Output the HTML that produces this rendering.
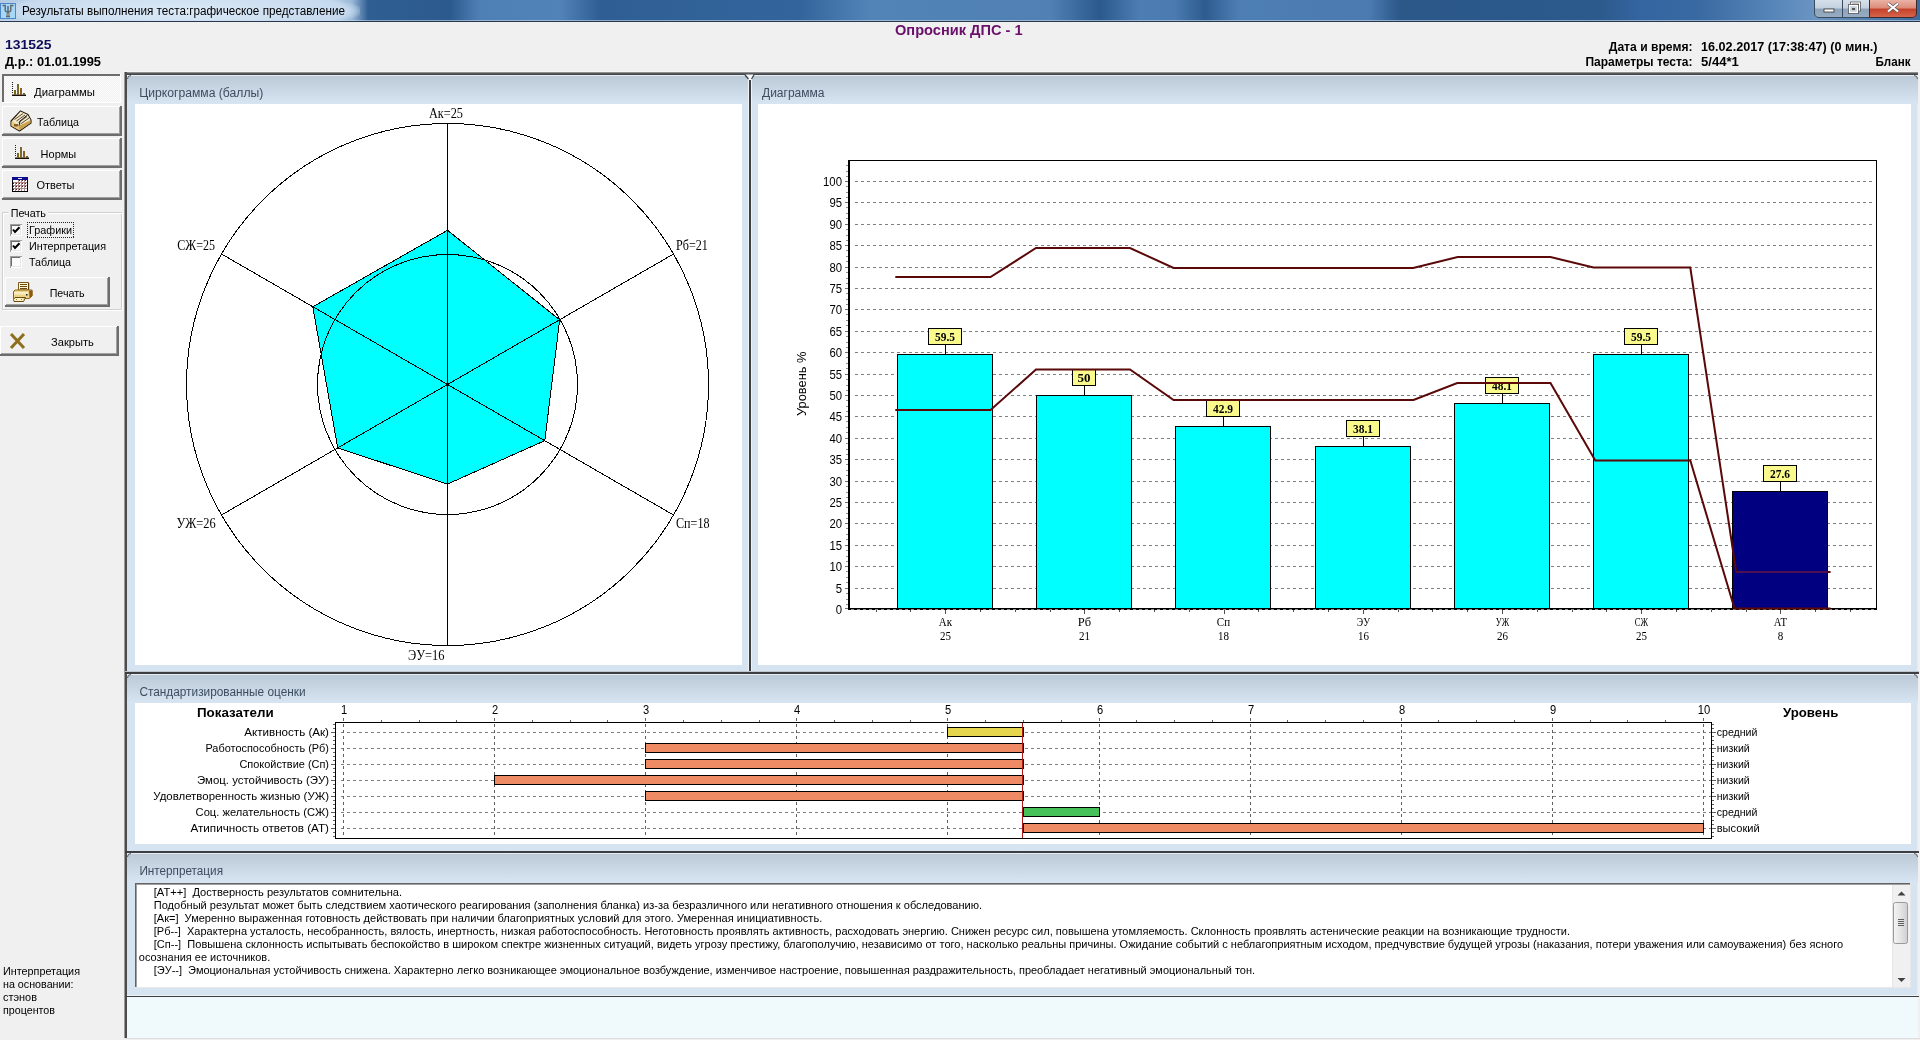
<!DOCTYPE html>
<html><head><meta charset="utf-8"><title>Результаты</title>
<style>
html,body{margin:0;padding:0;width:1920px;height:1040px;overflow:hidden;background:#f0f0f0;}
svg{display:block;will-change:transform;}
text{white-space:pre;}
</style></head><body>
<svg width="1920" height="1040" viewBox="0 0 1920 1040">
<defs>
<linearGradient id="ptitle" x1="0" y1="0" x2="0" y2="1">
<stop offset="0" stop-color="#bccad8"/><stop offset="1" stop-color="#d7e5f3"/></linearGradient>
<linearGradient id="tbar" x1="0" y1="0" x2="1920" y2="0" gradientUnits="userSpaceOnUse">
<stop offset="0.0000" stop-color="#b4cce4"/>
<stop offset="0.1719" stop-color="#bcd3ea"/>
<stop offset="0.1833" stop-color="#9ab8d8"/>
<stop offset="0.1917" stop-color="#2f5e93"/>
<stop offset="0.2344" stop-color="#2c5a8e"/>
<stop offset="0.2500" stop-color="#4f80b5"/>
<stop offset="0.2917" stop-color="#5283b8"/>
<stop offset="0.3125" stop-color="#2e5e94"/>
<stop offset="0.4167" stop-color="#33659c"/>
<stop offset="0.4531" stop-color="#5284b8"/>
<stop offset="0.5469" stop-color="#5080b4"/>
<stop offset="0.5729" stop-color="#2b598d"/>
<stop offset="0.5938" stop-color="#4d7eb3"/>
<stop offset="0.6120" stop-color="#4a7ab0"/>
<stop offset="0.6276" stop-color="#2e5b8f"/>
<stop offset="0.6458" stop-color="#4e7fb4"/>
<stop offset="0.7135" stop-color="#4a7aaf"/>
<stop offset="0.7292" stop-color="#2b5789"/>
<stop offset="0.8333" stop-color="#2c5a8d"/>
<stop offset="0.8542" stop-color="#3565a0"/>
<stop offset="0.8854" stop-color="#3a6aa2"/>
<stop offset="0.9271" stop-color="#5a88bb"/>
<stop offset="0.9448" stop-color="#6a94c2"/>
<stop offset="1.0000" stop-color="#3a6a9e"/>
</linearGradient>
<radialGradient id="glow" cx="180" cy="11" r="185" gradientUnits="userSpaceOnUse" gradientTransform="translate(180 11) scale(1 0.12) translate(-180 -11)">
<stop offset="0" stop-color="#dceaf7"/><stop offset="0.9" stop-color="#c6daee"/><stop offset="1" stop-color="#c6daee" stop-opacity="0"/></radialGradient>
<linearGradient id="minbtn" x1="0" y1="0" x2="0" y2="1">
<stop offset="0" stop-color="#d6e0ea"/><stop offset="0.45" stop-color="#c2d0de"/><stop offset="0.5" stop-color="#8ca3bb"/><stop offset="1" stop-color="#98aec4"/></linearGradient>
<linearGradient id="clsbtn" x1="0" y1="0" x2="0" y2="1">
<stop offset="0" stop-color="#eab3a6"/><stop offset="0.45" stop-color="#dc8a78"/><stop offset="0.5" stop-color="#c4402a"/><stop offset="1" stop-color="#d86a50"/></linearGradient>
<linearGradient id="pborder" x1="0" y1="0" x2="0" y2="1">
<stop offset="0" stop-color="#b0b0b0"/><stop offset="0.4" stop-color="#5e5f61"/><stop offset="1" stop-color="#3a3c3f"/></linearGradient>
<linearGradient id="thumb" x1="0" y1="0" x2="1" y2="0">
<stop offset="0" stop-color="#f4f4f4"/><stop offset="0.5" stop-color="#e4e4e4"/><stop offset="1" stop-color="#cfcfcf"/></linearGradient>
<pattern id="dither" width="2" height="2" patternUnits="userSpaceOnUse"><rect width="2" height="2" fill="#f0f0f0"/><rect width="1" height="1" fill="#fdfdfd"/><rect x="1" y="1" width="1" height="1" fill="#fdfdfd"/></pattern>
</defs>
<rect x="0" y="0" width="1920" height="1040" fill="#f0f0f0" />
<rect x="0" y="0" width="1920" height="21" fill="url(#tbar)" />
<rect x="0" y="0" width="360" height="21" fill="url(#glow)" />
<rect x="0" y="20" width="1920" height="1" fill="#c8dcee" opacity="0.6"/>
<rect x="0" y="21" width="1920" height="1" fill="#29384a" />
<rect x="0" y="3" width="16" height="16" fill="#a4d8f6" />
<rect x="0.5" y="3.5" width="15" height="15" fill="none" stroke="#4f86c8" stroke-width="1"/>
<path d="M2.5,5.5 H5.2 V10 Q5.2,12 8,12 Q10.8,12 10.8,10 V5.5 H13.5" fill="none" stroke="#5e6870" stroke-width="1.4"/>
<path d="M8,6 V17 M6,16.5 H10" fill="none" stroke="#5e6870" stroke-width="1.5"/>
<rect x="6.5" y="13" width="3" height="3" fill="#8a8a8a" />
<text x="22.00" y="15.00" font-family="'Liberation Sans', sans-serif" font-size="12" font-weight="normal" fill="#000" text-anchor="start" textLength="323.00" lengthAdjust="spacingAndGlyphs" >Результаты выполнения теста:графическое представление</text>
<path d="M1814,0 V13 Q1814,18 1819,18 H1869 V0 Z" fill="url(#minbtn)"/>
<path d="M1814.5,0 V13 Q1814.5,17.5 1819,17.5 H1869" fill="none" stroke="#3b4a5c" stroke-width="1"/>
<line x1="1842.5" y1="0" x2="1842.5" y2="17.5" stroke="#3b4a5c" stroke-width="1" />
<path d="M1869,0 V18 H1912 Q1917,18 1917,13 V0 Z" fill="url(#clsbtn)"/>
<path d="M1869.5,0 V17.5 H1912 Q1916.5,17.5 1916.5,13 V0" fill="none" stroke="#3b2a2a" stroke-width="1"/>
<rect x="1824" y="9" width="10" height="3" fill="#ffffff" stroke="#333" stroke-width="0.8"/>
<rect x="1851.5" y="3" width="8" height="7" fill="none" stroke="#333" stroke-width="2.6"/>
<rect x="1851.5" y="3" width="8" height="7" fill="none" stroke="#fff" stroke-width="1.4"/>
<rect x="1849.5" y="5.5" width="8" height="7" fill="#c2d0de" stroke="#333" stroke-width="2.6"/>
<rect x="1849.5" y="5.5" width="8" height="7" fill="#c2d0de" stroke="#fff" stroke-width="1.4"/>
<rect x="1852" y="8" width="3" height="2" fill="#555" />
<path d="M1888,3.5 L1898,11.5 M1898,3.5 L1888,11.5" stroke="#555" stroke-width="3.4"/>
<path d="M1888,3.5 L1898,11.5 M1898,3.5 L1888,11.5" stroke="#fff" stroke-width="2.2"/>
<text x="5.00" y="48.75" font-family="'Liberation Sans', sans-serif" font-size="13" font-weight="bold" fill="#0e0e5a" text-anchor="start" textLength="46.50" lengthAdjust="spacingAndGlyphs" >131525</text>
<text x="5.00" y="66.00" font-family="'Liberation Sans', sans-serif" font-size="13" font-weight="bold" fill="#000" text-anchor="start" textLength="96.00" lengthAdjust="spacingAndGlyphs" >Д.р.: 01.01.1995</text>
<text x="895.00" y="35.00" font-family="'Liberation Sans', sans-serif" font-size="14" font-weight="bold" fill="#6a0f6a" text-anchor="start" textLength="127.50" lengthAdjust="spacingAndGlyphs" >Опросник ДПС - 1</text>
<text x="1608.75" y="51.25" font-family="'Liberation Sans', sans-serif" font-size="12" font-weight="bold" fill="#000" text-anchor="start" textLength="83.75" lengthAdjust="spacingAndGlyphs" >Дата и время:</text>
<text x="1701.00" y="51.25" font-family="'Liberation Sans', sans-serif" font-size="12" font-weight="bold" fill="#000" text-anchor="start" textLength="176.50" lengthAdjust="spacingAndGlyphs" >16.02.2017 (17:38:47) (0 мин.)</text>
<text x="1585.50" y="66.25" font-family="'Liberation Sans', sans-serif" font-size="12" font-weight="bold" fill="#000" text-anchor="start" textLength="107.00" lengthAdjust="spacingAndGlyphs" >Параметры теста:</text>
<text x="1701.00" y="66.25" font-family="'Liberation Sans', sans-serif" font-size="12" font-weight="bold" fill="#000" text-anchor="start" textLength="37.75" lengthAdjust="spacingAndGlyphs" >5/44*1</text>
<text x="1875.50" y="66.25" font-family="'Liberation Sans', sans-serif" font-size="12" font-weight="bold" fill="#000" text-anchor="start" textLength="35.00" lengthAdjust="spacingAndGlyphs" >Бланк</text>
<rect x="2" y="74" width="119" height="29" fill="url(#dither)" />
<rect x="2" y="74" width="119" height="2" fill="#6d6d6d" />
<rect x="2" y="74" width="2" height="29" fill="#6d6d6d" />
<rect x="2" y="102" width="119" height="1" fill="#ffffff" />
<rect x="120" y="74" width="1" height="29" fill="#ffffff" />
<rect x="2" y="106" width="120" height="30" fill="#f0f0f0" />
<rect x="2" y="106" width="120" height="1" fill="#ffffff" />
<rect x="2" y="106" width="1" height="30" fill="#ffffff" />
<rect x="2" y="134" width="120" height="2" fill="#6d6d6d" />
<rect x="120" y="106" width="2" height="30" fill="#6d6d6d" />
<rect x="3" y="133" width="117" height="1" fill="#a0a0a0" />
<rect x="119" y="107" width="1" height="27" fill="#a0a0a0" />
<rect x="2" y="138" width="120" height="30" fill="#f0f0f0" />
<rect x="2" y="138" width="120" height="1" fill="#ffffff" />
<rect x="2" y="138" width="1" height="30" fill="#ffffff" />
<rect x="2" y="166" width="120" height="2" fill="#6d6d6d" />
<rect x="120" y="138" width="2" height="30" fill="#6d6d6d" />
<rect x="3" y="165" width="117" height="1" fill="#a0a0a0" />
<rect x="119" y="139" width="1" height="27" fill="#a0a0a0" />
<rect x="2" y="170" width="120" height="30" fill="#f0f0f0" />
<rect x="2" y="170" width="120" height="1" fill="#ffffff" />
<rect x="2" y="170" width="1" height="30" fill="#ffffff" />
<rect x="2" y="198" width="120" height="2" fill="#6d6d6d" />
<rect x="120" y="170" width="2" height="30" fill="#6d6d6d" />
<rect x="3" y="197" width="117" height="1" fill="#a0a0a0" />
<rect x="119" y="171" width="1" height="27" fill="#a0a0a0" />
<rect x="12" y="82" width="1" height="1" fill="#202020" />
<rect x="12" y="84" width="1" height="1" fill="#202020" />
<rect x="12" y="86" width="1" height="1" fill="#202020" />
<rect x="12" y="88" width="1" height="1" fill="#202020" />
<rect x="12" y="90" width="1" height="1" fill="#202020" />
<rect x="12" y="92" width="1" height="1" fill="#202020" />
<rect x="12" y="94.5" width="14" height="1.5" fill="#1a1208" />
<rect x="14" y="90" width="2" height="5" fill="#75661a" />
<rect x="17" y="84" width="2" height="11" fill="#7a6a30" />
<rect x="20" y="88" width="2" height="7" fill="#8a6020" />
<rect x="23" y="93" width="2" height="2" fill="#6a6040" />
<rect x="15" y="145" width="1" height="1" fill="#202020" />
<rect x="15" y="147" width="1" height="1" fill="#202020" />
<rect x="15" y="149" width="1" height="1" fill="#202020" />
<rect x="15" y="151" width="1" height="1" fill="#202020" />
<rect x="15" y="153" width="1" height="1" fill="#202020" />
<rect x="15" y="155" width="1" height="1" fill="#202020" />
<rect x="15" y="157.5" width="14" height="1.5" fill="#1a1208" />
<rect x="17" y="153" width="2" height="5" fill="#75661a" />
<rect x="20" y="147" width="2" height="11" fill="#7a6a30" />
<rect x="23" y="151" width="2" height="7" fill="#8a6020" />
<rect x="26" y="156" width="2" height="2" fill="#6a6040" />
<text x="34.00" y="95.60" font-family="'Liberation Sans', sans-serif" font-size="11" font-weight="normal" fill="#000" text-anchor="start" textLength="61.00" lengthAdjust="spacingAndGlyphs" >Диаграммы</text>
<path d="M20.5,111 L28,114.5 L31,120 L31,123 L19.5,131 L11,126 L11,121 Z" fill="#d9b76c" stroke="#1e1a10" stroke-width="1.1" stroke-linejoin="round"/>
<path d="M20.5,111.5 L27.5,115 L30.5,120 L19,126 L12,121.5 Z" fill="#f2e8cc"/>
<path d="M14.5,119.5 L23,113.5 M16.5,121 L25,115 M18.5,122.5 L27,116.5 M20.5,124 L29,118" stroke="#5a4a30" stroke-width="1"/>
<path d="M27.5,115 L20,121 L19,126" fill="none" stroke="#222" stroke-width="1"/>
<path d="M11.5,121.5 L19,126 L19.5,130.5 L11.5,126 Z" fill="#e6c884"/>
<path d="M19,126 L30.5,120.5 L30.5,123 L19.5,130.5 Z" fill="#c9a24c"/>
<rect x="14" y="124" width="4" height="2.5" fill="#8a6418" />
<text x="37.00" y="125.60" font-family="'Liberation Sans', sans-serif" font-size="11" font-weight="normal" fill="#000" text-anchor="start" textLength="42.00" lengthAdjust="spacingAndGlyphs" >Таблица</text>
<text x="40.60" y="157.50" font-family="'Liberation Sans', sans-serif" font-size="11" font-weight="normal" fill="#000" text-anchor="start" textLength="35.60" lengthAdjust="spacingAndGlyphs" >Нормы</text>
<rect x="12" y="177" width="16" height="15" fill="#000000" />
<rect x="12" y="177" width="16" height="3" fill="#0c0c90" />
<rect x="18" y="178" width="4" height="1" fill="#e0e0ff" />
<rect x="13" y="180" width="14" height="11" fill="#a88888" />
<rect x="13" y="180" width="2" height="2" fill="#ffffff" />
<rect x="13" y="183" width="2" height="2" fill="#ffffff" />
<rect x="13" y="183" width="1" height="1" fill="#6a1010" />
<rect x="13" y="186" width="2" height="2" fill="#ffffff" />
<rect x="13" y="186" width="1" height="1" fill="#6a1010" />
<rect x="13" y="189" width="2" height="2" fill="#ffffff" />
<rect x="13" y="189" width="1" height="1" fill="#6a1010" />
<rect x="16" y="180" width="2" height="2" fill="#ffffff" />
<rect x="16" y="180" width="1" height="1" fill="#6a1010" />
<rect x="16" y="183" width="2" height="2" fill="#ffffff" />
<rect x="16" y="183" width="1" height="1" fill="#6a1010" />
<rect x="16" y="186" width="2" height="2" fill="#ffffff" />
<rect x="16" y="186" width="1" height="1" fill="#6a1010" />
<rect x="16" y="189" width="2" height="2" fill="#ffffff" />
<rect x="16" y="189" width="1" height="1" fill="#6a1010" />
<rect x="19" y="180" width="2" height="2" fill="#ffffff" />
<rect x="19" y="180" width="1" height="1" fill="#6a1010" />
<rect x="19" y="183" width="2" height="2" fill="#ffffff" />
<rect x="19" y="183" width="1" height="1" fill="#6a1010" />
<rect x="19" y="186" width="2" height="2" fill="#ffffff" />
<rect x="19" y="186" width="1" height="1" fill="#6a1010" />
<rect x="19" y="189" width="2" height="2" fill="#ffffff" />
<rect x="19" y="189" width="1" height="1" fill="#6a1010" />
<rect x="22" y="180" width="2" height="2" fill="#ffffff" />
<rect x="22" y="180" width="1" height="1" fill="#6a1010" />
<rect x="22" y="183" width="2" height="2" fill="#ffffff" />
<rect x="22" y="183" width="1" height="1" fill="#6a1010" />
<rect x="22" y="186" width="2" height="2" fill="#ffffff" />
<rect x="22" y="186" width="1" height="1" fill="#6a1010" />
<rect x="22" y="189" width="2" height="2" fill="#ffffff" />
<rect x="25" y="180" width="2" height="2" fill="#ffffff" />
<rect x="25" y="180" width="1" height="1" fill="#6a1010" />
<rect x="25" y="183" width="2" height="2" fill="#ffffff" />
<rect x="25" y="183" width="1" height="1" fill="#6a1010" />
<rect x="25" y="186" width="2" height="2" fill="#ffffff" />
<rect x="25" y="186" width="1" height="1" fill="#6a1010" />
<rect x="25" y="189" width="2" height="2" fill="#ffffff" />
<rect x="13" y="180" width="5" height="2" fill="#ffffff" />
<text x="36.50" y="189.40" font-family="'Liberation Sans', sans-serif" font-size="11" font-weight="normal" fill="#000" text-anchor="start" textLength="38.00" lengthAdjust="spacingAndGlyphs" >Ответы</text>
<path d="M8.5,212.5 H2.5 V309.5 H121.5 V212.5 H48" fill="none" stroke="#d0d0d0" stroke-width="1"/>
<path d="M8.5,213.5 H3.5 V308.5 M3.5,310.5 H122.5 V213.5 H48" fill="none" stroke="#ffffff" stroke-width="1"/>
<text x="10.70" y="216.60" font-family="'Liberation Sans', sans-serif" font-size="11" font-weight="normal" fill="#000" text-anchor="start" textLength="35.30" lengthAdjust="spacingAndGlyphs" >Печать</text>
<rect x="10" y="224" width="12" height="12" fill="#ffffff" />
<rect x="10" y="224" width="12" height="1" fill="#a0a0a0" />
<rect x="10" y="224" width="1" height="12" fill="#a0a0a0" />
<rect x="11" y="225" width="10" height="1" fill="#6e6e6e" />
<rect x="11" y="225" width="1" height="10" fill="#6e6e6e" />
<rect x="11" y="234" width="10" height="1" fill="#e6e6e6" />
<rect x="20" y="225" width="1" height="10" fill="#e6e6e6" />
<rect x="12" y="226" width="8" height="8" fill="#fbfbfb" />
<path d="M13,229.5 L15,232 L19.5,227.2" fill="none" stroke="#000" stroke-width="2"/>
<rect x="10" y="240" width="12" height="12" fill="#ffffff" />
<rect x="10" y="240" width="12" height="1" fill="#a0a0a0" />
<rect x="10" y="240" width="1" height="12" fill="#a0a0a0" />
<rect x="11" y="241" width="10" height="1" fill="#6e6e6e" />
<rect x="11" y="241" width="1" height="10" fill="#6e6e6e" />
<rect x="11" y="250" width="10" height="1" fill="#e6e6e6" />
<rect x="20" y="241" width="1" height="10" fill="#e6e6e6" />
<rect x="12" y="242" width="8" height="8" fill="#fbfbfb" />
<path d="M13,245.5 L15,248 L19.5,243.2" fill="none" stroke="#000" stroke-width="2"/>
<rect x="10" y="256" width="12" height="12" fill="#ffffff" />
<rect x="10" y="256" width="12" height="1" fill="#a0a0a0" />
<rect x="10" y="256" width="1" height="12" fill="#a0a0a0" />
<rect x="11" y="257" width="10" height="1" fill="#6e6e6e" />
<rect x="11" y="257" width="1" height="10" fill="#6e6e6e" />
<rect x="11" y="266" width="10" height="1" fill="#e6e6e6" />
<rect x="20" y="257" width="1" height="10" fill="#e6e6e6" />
<rect x="12" y="258" width="8" height="8" fill="#fbfbfb" />
<text x="29.00" y="234.40" font-family="'Liberation Sans', sans-serif" font-size="11" font-weight="normal" fill="#000" text-anchor="start" textLength="43.00" lengthAdjust="spacingAndGlyphs" >Графики</text>
<rect x="27" y="222" width="1" height="1" fill="#222" />
<rect x="27" y="237" width="1" height="1" fill="#222" />
<rect x="29" y="222" width="1" height="1" fill="#222" />
<rect x="29" y="237" width="1" height="1" fill="#222" />
<rect x="31" y="222" width="1" height="1" fill="#222" />
<rect x="31" y="237" width="1" height="1" fill="#222" />
<rect x="33" y="222" width="1" height="1" fill="#222" />
<rect x="33" y="237" width="1" height="1" fill="#222" />
<rect x="35" y="222" width="1" height="1" fill="#222" />
<rect x="35" y="237" width="1" height="1" fill="#222" />
<rect x="37" y="222" width="1" height="1" fill="#222" />
<rect x="37" y="237" width="1" height="1" fill="#222" />
<rect x="39" y="222" width="1" height="1" fill="#222" />
<rect x="39" y="237" width="1" height="1" fill="#222" />
<rect x="41" y="222" width="1" height="1" fill="#222" />
<rect x="41" y="237" width="1" height="1" fill="#222" />
<rect x="43" y="222" width="1" height="1" fill="#222" />
<rect x="43" y="237" width="1" height="1" fill="#222" />
<rect x="45" y="222" width="1" height="1" fill="#222" />
<rect x="45" y="237" width="1" height="1" fill="#222" />
<rect x="47" y="222" width="1" height="1" fill="#222" />
<rect x="47" y="237" width="1" height="1" fill="#222" />
<rect x="49" y="222" width="1" height="1" fill="#222" />
<rect x="49" y="237" width="1" height="1" fill="#222" />
<rect x="51" y="222" width="1" height="1" fill="#222" />
<rect x="51" y="237" width="1" height="1" fill="#222" />
<rect x="53" y="222" width="1" height="1" fill="#222" />
<rect x="53" y="237" width="1" height="1" fill="#222" />
<rect x="55" y="222" width="1" height="1" fill="#222" />
<rect x="55" y="237" width="1" height="1" fill="#222" />
<rect x="57" y="222" width="1" height="1" fill="#222" />
<rect x="57" y="237" width="1" height="1" fill="#222" />
<rect x="59" y="222" width="1" height="1" fill="#222" />
<rect x="59" y="237" width="1" height="1" fill="#222" />
<rect x="61" y="222" width="1" height="1" fill="#222" />
<rect x="61" y="237" width="1" height="1" fill="#222" />
<rect x="63" y="222" width="1" height="1" fill="#222" />
<rect x="63" y="237" width="1" height="1" fill="#222" />
<rect x="65" y="222" width="1" height="1" fill="#222" />
<rect x="65" y="237" width="1" height="1" fill="#222" />
<rect x="67" y="222" width="1" height="1" fill="#222" />
<rect x="67" y="237" width="1" height="1" fill="#222" />
<rect x="69" y="222" width="1" height="1" fill="#222" />
<rect x="69" y="237" width="1" height="1" fill="#222" />
<rect x="71" y="222" width="1" height="1" fill="#222" />
<rect x="71" y="237" width="1" height="1" fill="#222" />
<rect x="73" y="222" width="1" height="1" fill="#222" />
<rect x="73" y="237" width="1" height="1" fill="#222" />
<rect x="27" y="222" width="1" height="1" fill="#222" />
<rect x="73" y="222" width="1" height="1" fill="#222" />
<rect x="27" y="224" width="1" height="1" fill="#222" />
<rect x="73" y="224" width="1" height="1" fill="#222" />
<rect x="27" y="226" width="1" height="1" fill="#222" />
<rect x="73" y="226" width="1" height="1" fill="#222" />
<rect x="27" y="228" width="1" height="1" fill="#222" />
<rect x="73" y="228" width="1" height="1" fill="#222" />
<rect x="27" y="230" width="1" height="1" fill="#222" />
<rect x="73" y="230" width="1" height="1" fill="#222" />
<rect x="27" y="232" width="1" height="1" fill="#222" />
<rect x="73" y="232" width="1" height="1" fill="#222" />
<rect x="27" y="234" width="1" height="1" fill="#222" />
<rect x="73" y="234" width="1" height="1" fill="#222" />
<rect x="27" y="236" width="1" height="1" fill="#222" />
<rect x="73" y="236" width="1" height="1" fill="#222" />
<text x="29.00" y="250.40" font-family="'Liberation Sans', sans-serif" font-size="11" font-weight="normal" fill="#000" text-anchor="start" textLength="77.00" lengthAdjust="spacingAndGlyphs" >Интерпретация</text>
<text x="29.00" y="266.30" font-family="'Liberation Sans', sans-serif" font-size="11" font-weight="normal" fill="#000" text-anchor="start" textLength="42.00" lengthAdjust="spacingAndGlyphs" >Таблица</text>
<rect x="5" y="277" width="105" height="30" fill="#f0f0f0" />
<rect x="5" y="277" width="105" height="1" fill="#ffffff" />
<rect x="5" y="277" width="1" height="30" fill="#ffffff" />
<rect x="5" y="305" width="105" height="2" fill="#6d6d6d" />
<rect x="108" y="277" width="2" height="30" fill="#6d6d6d" />
<rect x="6" y="304" width="102" height="1" fill="#a0a0a0" />
<rect x="107" y="278" width="1" height="27" fill="#a0a0a0" />
<path d="M18.5,282.5 H28.5 V290 H18.5 Z" fill="#fff8d2" stroke="#7a5a18" stroke-width="1"/>
<rect x="28" y="283" width="1.2" height="7" fill="#5a3a08" />
<path d="M20,284.5 H27 M20,286.5 H27 M20,288.5 H27" stroke="#6a4a10" stroke-width="1"/>
<path d="M14,291 L15,290 H32 V296 L29.5,298.5 H13.5 V292 Z" fill="#ecd48a" stroke="#8a6418" stroke-width="1"/>
<path d="M29,290.5 L32.5,290.5 L32.5,295.5 L29.5,298.5 Z" fill="#8a5a14"/>
<rect x="14" y="292" width="14" height="2.5" fill="#f8ecc0" />
<rect x="26" y="294" width="1.5" height="1.5" fill="#222" />
<path d="M15,297.5 H25.5 L23.5,301.5 H14 L13.5,299.5 Z" fill="#fff2c4" stroke="#6a4a10" stroke-width="1"/>
<path d="M16,299 L17,300 M21,299 L22,300 M23,298.5 L24,299.5" stroke="#8a6a20" stroke-width="0.8"/>
<text x="49.70" y="296.70" font-family="'Liberation Sans', sans-serif" font-size="11" font-weight="normal" fill="#000" text-anchor="start" textLength="35.00" lengthAdjust="spacingAndGlyphs" >Печать</text>
<rect x="0" y="326" width="119" height="30" fill="#f0f0f0" />
<rect x="0" y="326" width="119" height="1" fill="#ffffff" />
<rect x="0" y="326" width="1" height="30" fill="#ffffff" />
<rect x="0" y="354" width="119" height="2" fill="#6d6d6d" />
<rect x="117" y="326" width="2" height="30" fill="#6d6d6d" />
<rect x="1" y="353" width="116" height="1" fill="#a0a0a0" />
<rect x="116" y="327" width="1" height="27" fill="#a0a0a0" />
<path d="M11,334 L24,348 M24,334 L11,348" stroke="#8d6e1e" stroke-width="3"/>
<text x="51.00" y="346.00" font-family="'Liberation Sans', sans-serif" font-size="11" font-weight="normal" fill="#000" text-anchor="start" textLength="42.80" lengthAdjust="spacingAndGlyphs" >Закрыть</text>
<text x="3.00" y="975.00" font-family="'Liberation Sans', sans-serif" font-size="11" font-weight="normal" fill="#000" text-anchor="start" textLength="77.00" lengthAdjust="spacingAndGlyphs" >Интерпретация</text>
<text x="3.00" y="988.00" font-family="'Liberation Sans', sans-serif" font-size="11" font-weight="normal" fill="#000" text-anchor="start" textLength="70.50" lengthAdjust="spacingAndGlyphs" >на основании:</text>
<text x="3.00" y="1001.00" font-family="'Liberation Sans', sans-serif" font-size="11" font-weight="normal" fill="#000" text-anchor="start" textLength="34.00" lengthAdjust="spacingAndGlyphs" >стэнов</text>
<text x="3.00" y="1014.00" font-family="'Liberation Sans', sans-serif" font-size="11" font-weight="normal" fill="#000" text-anchor="start" textLength="52.00" lengthAdjust="spacingAndGlyphs" >процентов</text>
<rect x="127" y="74" width="1791" height="964" fill="#d6e4f2" />
<rect x="125" y="72" width="1794" height="3" fill="url(#pborder)" />
<rect x="125" y="71" width="1794" height="1" fill="#f6f6f6" />
<rect x="125" y="72" width="2" height="966" fill="#4a4c4f" />
<rect x="124" y="72" width="1" height="966" fill="#9a9a9a" />
<rect x="1918" y="72" width="2" height="966" fill="#f0f0f0" />
<rect x="1917" y="75" width="1" height="963" fill="#e4ecf4" />
<rect x="127" y="75" width="623" height="1" fill="#e8edf3" />
<rect x="127" y="76" width="623" height="28" fill="url(#ptitle)" />
<rect x="752" y="75" width="1166" height="1" fill="#e8edf3" />
<rect x="752" y="76" width="1166" height="28" fill="url(#ptitle)" />
<rect x="749" y="74" width="2" height="599" fill="#3c3e41" />
<rect x="748" y="75" width="1" height="598" fill="#eef3f8" />
<rect x="751" y="75" width="1" height="598" fill="#eef3f8" />
<path d="M745.5,74.5 L753.5,74.5 L751,78 L751,80 L749,80 L749,78 Z" fill="#fafbfc"/>
<path d="M745,75 L748.5,79 M754,75 L751.5,79" stroke="#3c3e41" stroke-width="1.2"/>
<rect x="135" y="104" width="607" height="561" fill="#ffffff" />
<rect x="758" y="104" width="1153" height="561" fill="#ffffff" />
<rect x="125" y="672" width="1794" height="2" fill="#3c3e41" />
<rect x="125" y="671" width="1794" height="1" fill="#c0c6ce" />
<rect x="127" y="674" width="1791" height="1" fill="#e8edf3" />
<rect x="127" y="675" width="1791" height="28" fill="url(#ptitle)" />
<rect x="135" y="703" width="1776" height="141" fill="#ffffff" />
<rect x="125" y="851" width="1794" height="2" fill="#3c3e41" />
<rect x="127" y="853" width="1791" height="1" fill="#e8edf3" />
<rect x="127" y="854" width="1791" height="28" fill="url(#ptitle)" />
<rect x="135" y="883" width="1776" height="105" fill="#ffffff" />
<rect x="135" y="883" width="1776" height="1" fill="#646464" />
<rect x="135" y="883" width="1" height="105" fill="#646464" />
<rect x="136" y="884" width="1774" height="1" fill="#a0a0a0" />
<rect x="136" y="884" width="1" height="103" fill="#a0a0a0" />
<rect x="135" y="987" width="1776" height="1" fill="#e8e8e8" />
<rect x="1910" y="883" width="1" height="105" fill="#e8e8e8" />
<rect x="127" y="995" width="1791" height="1" fill="#eef4fa" />
<rect x="125" y="996" width="1794" height="1" fill="#3c3e41" />
<rect x="127" y="997" width="1791" height="41" fill="#f0fafd" />
<rect x="125" y="1038" width="1795" height="1" fill="#dedede" />
<rect x="125" y="1039" width="1795" height="1" fill="#f0f0f0" />
<path d="M127,75 h4 q-4,0 -4,4 z" fill="#f6f8fa"/>
<path d="M131,75.5 q-3.5,0 -3.5,3.5" fill="none" stroke="#5a5c60" stroke-width="1"/>
<path d="M127,674 h4 q-4,0 -4,4 z" fill="#f6f8fa"/>
<path d="M131,674.5 q-3.5,0 -3.5,3.5" fill="none" stroke="#5a5c60" stroke-width="1"/>
<path d="M127,853 h4 q-4,0 -4,4 z" fill="#f6f8fa"/>
<path d="M131,853.5 q-3.5,0 -3.5,3.5" fill="none" stroke="#5a5c60" stroke-width="1"/>
<path d="M1918,75 h-4 q4,0 4,4 z" fill="#f6f8fa"/>
<path d="M1914,75.5 q3.5,0 3.5,3.5" fill="none" stroke="#5a5c60" stroke-width="1"/>
<path d="M1918,674 h-4 q4,0 4,4 z" fill="#f6f8fa"/>
<path d="M1914,674.5 q3.5,0 3.5,3.5" fill="none" stroke="#5a5c60" stroke-width="1"/>
<path d="M1918,853 h-4 q4,0 4,4 z" fill="#f6f8fa"/>
<path d="M1914,853.5 q3.5,0 3.5,3.5" fill="none" stroke="#5a5c60" stroke-width="1"/>
<text x="139.25" y="97.00" font-family="'Liberation Sans', sans-serif" font-size="12" font-weight="normal" fill="#3d4d5f" text-anchor="start" textLength="124.00" lengthAdjust="spacingAndGlyphs" >Циркограмма (баллы)</text>
<text x="762.00" y="97.00" font-family="'Liberation Sans', sans-serif" font-size="12" font-weight="normal" fill="#3d4d5f" text-anchor="start" textLength="62.50" lengthAdjust="spacingAndGlyphs" >Диаграмма</text>
<text x="139.40" y="696.25" font-family="'Liberation Sans', sans-serif" font-size="12" font-weight="normal" fill="#3d4d5f" text-anchor="start" textLength="166.20" lengthAdjust="spacingAndGlyphs" >Стандартизированные оценки</text>
<text x="139.40" y="875.00" font-family="'Liberation Sans', sans-serif" font-size="12" font-weight="normal" fill="#3d4d5f" text-anchor="start" textLength="83.60" lengthAdjust="spacingAndGlyphs" >Интерпретация</text>
<g shape-rendering="crispEdges">
<polygon points="447.5,230.3 559.7,319.8 544.8,440.6 447.5,484.1 337.7,447.9 312.8,306.8" fill="#00ffff" stroke="#000" stroke-width="1"/>
<circle cx="447.5" cy="384.5" r="261" fill="none" stroke="#000" stroke-width="1"/>
<circle cx="447.5" cy="384.5" r="130" fill="none" stroke="#000" stroke-width="1"/>
<line x1="447.5" y1="384.5" x2="447.50" y2="123.50" stroke="#000" stroke-width="1" />
<line x1="447.5" y1="384.5" x2="673.53" y2="254.00" stroke="#000" stroke-width="1" />
<line x1="447.5" y1="384.5" x2="673.53" y2="515.00" stroke="#000" stroke-width="1" />
<line x1="447.5" y1="384.5" x2="447.50" y2="645.50" stroke="#000" stroke-width="1" />
<line x1="447.5" y1="384.5" x2="221.47" y2="515.00" stroke="#000" stroke-width="1" />
<line x1="447.5" y1="384.5" x2="221.47" y2="254.00" stroke="#000" stroke-width="1" />
</g>
<text x="429.00" y="118.00" font-family="'Liberation Serif', serif" font-size="13.6" font-weight="normal" fill="#000" text-anchor="start" textLength="34.00" lengthAdjust="spacingAndGlyphs" >Ак=25</text>
<text x="177.30" y="250.00" font-family="'Liberation Serif', serif" font-size="13.6" font-weight="normal" fill="#000" text-anchor="start" textLength="37.70" lengthAdjust="spacingAndGlyphs" >СЖ=25</text>
<text x="676.00" y="250.00" font-family="'Liberation Serif', serif" font-size="13.6" font-weight="normal" fill="#000" text-anchor="start" textLength="31.80" lengthAdjust="spacingAndGlyphs" >Рб=21</text>
<text x="176.40" y="528.00" font-family="'Liberation Serif', serif" font-size="13.6" font-weight="normal" fill="#000" text-anchor="start" textLength="39.30" lengthAdjust="spacingAndGlyphs" >УЖ=26</text>
<text x="676.00" y="528.00" font-family="'Liberation Serif', serif" font-size="13.6" font-weight="normal" fill="#000" text-anchor="start" textLength="33.50" lengthAdjust="spacingAndGlyphs" >Сп=18</text>
<text x="408.00" y="660.00" font-family="'Liberation Serif', serif" font-size="13.6" font-weight="normal" fill="#000" text-anchor="start" textLength="36.60" lengthAdjust="spacingAndGlyphs" >ЭУ=16</text>
<g shape-rendering="crispEdges">
<line x1="855" y1="588.5" x2="1875" y2="588.5" stroke="#808080" stroke-width="1" stroke-dasharray="3 3"/>
<rect x="845" y="588" width="3" height="1" fill="#707070" />
<text x="842.00" y="593.00" font-family="'Liberation Sans', sans-serif" font-size="13" font-weight="normal" fill="#000" text-anchor="end" textLength="6.30" lengthAdjust="spacingAndGlyphs" >5</text>
<line x1="855" y1="566.5" x2="1875" y2="566.5" stroke="#808080" stroke-width="1" stroke-dasharray="3 3"/>
<rect x="845" y="566" width="3" height="1" fill="#707070" />
<text x="842.00" y="571.00" font-family="'Liberation Sans', sans-serif" font-size="13" font-weight="normal" fill="#000" text-anchor="end" textLength="12.60" lengthAdjust="spacingAndGlyphs" >10</text>
<line x1="855" y1="545.5" x2="1875" y2="545.5" stroke="#808080" stroke-width="1" stroke-dasharray="3 3"/>
<rect x="845" y="545" width="3" height="1" fill="#707070" />
<text x="842.00" y="550.00" font-family="'Liberation Sans', sans-serif" font-size="13" font-weight="normal" fill="#000" text-anchor="end" textLength="12.60" lengthAdjust="spacingAndGlyphs" >15</text>
<line x1="855" y1="523.5" x2="1875" y2="523.5" stroke="#808080" stroke-width="1" stroke-dasharray="3 3"/>
<rect x="845" y="523" width="3" height="1" fill="#707070" />
<text x="842.00" y="528.00" font-family="'Liberation Sans', sans-serif" font-size="13" font-weight="normal" fill="#000" text-anchor="end" textLength="12.60" lengthAdjust="spacingAndGlyphs" >20</text>
<line x1="855" y1="502.5" x2="1875" y2="502.5" stroke="#808080" stroke-width="1" stroke-dasharray="3 3"/>
<rect x="845" y="502" width="3" height="1" fill="#707070" />
<text x="842.00" y="507.00" font-family="'Liberation Sans', sans-serif" font-size="13" font-weight="normal" fill="#000" text-anchor="end" textLength="12.60" lengthAdjust="spacingAndGlyphs" >25</text>
<line x1="855" y1="481.5" x2="1875" y2="481.5" stroke="#808080" stroke-width="1" stroke-dasharray="3 3"/>
<rect x="845" y="481" width="3" height="1" fill="#707070" />
<text x="842.00" y="486.00" font-family="'Liberation Sans', sans-serif" font-size="13" font-weight="normal" fill="#000" text-anchor="end" textLength="12.60" lengthAdjust="spacingAndGlyphs" >30</text>
<line x1="855" y1="459.5" x2="1875" y2="459.5" stroke="#808080" stroke-width="1" stroke-dasharray="3 3"/>
<rect x="845" y="459" width="3" height="1" fill="#707070" />
<text x="842.00" y="464.00" font-family="'Liberation Sans', sans-serif" font-size="13" font-weight="normal" fill="#000" text-anchor="end" textLength="12.60" lengthAdjust="spacingAndGlyphs" >35</text>
<line x1="855" y1="438.5" x2="1875" y2="438.5" stroke="#808080" stroke-width="1" stroke-dasharray="3 3"/>
<rect x="845" y="438" width="3" height="1" fill="#707070" />
<text x="842.00" y="443.00" font-family="'Liberation Sans', sans-serif" font-size="13" font-weight="normal" fill="#000" text-anchor="end" textLength="12.60" lengthAdjust="spacingAndGlyphs" >40</text>
<line x1="855" y1="416.5" x2="1875" y2="416.5" stroke="#808080" stroke-width="1" stroke-dasharray="3 3"/>
<rect x="845" y="416" width="3" height="1" fill="#707070" />
<text x="842.00" y="421.00" font-family="'Liberation Sans', sans-serif" font-size="13" font-weight="normal" fill="#000" text-anchor="end" textLength="12.60" lengthAdjust="spacingAndGlyphs" >45</text>
<line x1="855" y1="395.5" x2="1875" y2="395.5" stroke="#808080" stroke-width="1" stroke-dasharray="3 3"/>
<rect x="845" y="395" width="3" height="1" fill="#707070" />
<text x="842.00" y="400.00" font-family="'Liberation Sans', sans-serif" font-size="13" font-weight="normal" fill="#000" text-anchor="end" textLength="12.60" lengthAdjust="spacingAndGlyphs" >50</text>
<line x1="855" y1="374.5" x2="1875" y2="374.5" stroke="#808080" stroke-width="1" stroke-dasharray="3 3"/>
<rect x="845" y="374" width="3" height="1" fill="#707070" />
<text x="842.00" y="379.00" font-family="'Liberation Sans', sans-serif" font-size="13" font-weight="normal" fill="#000" text-anchor="end" textLength="12.60" lengthAdjust="spacingAndGlyphs" >55</text>
<line x1="855" y1="352.5" x2="1875" y2="352.5" stroke="#808080" stroke-width="1" stroke-dasharray="3 3"/>
<rect x="845" y="352" width="3" height="1" fill="#707070" />
<text x="842.00" y="357.00" font-family="'Liberation Sans', sans-serif" font-size="13" font-weight="normal" fill="#000" text-anchor="end" textLength="12.60" lengthAdjust="spacingAndGlyphs" >60</text>
<line x1="855" y1="331.5" x2="1875" y2="331.5" stroke="#808080" stroke-width="1" stroke-dasharray="3 3"/>
<rect x="845" y="331" width="3" height="1" fill="#707070" />
<text x="842.00" y="336.00" font-family="'Liberation Sans', sans-serif" font-size="13" font-weight="normal" fill="#000" text-anchor="end" textLength="12.60" lengthAdjust="spacingAndGlyphs" >65</text>
<line x1="855" y1="309.5" x2="1875" y2="309.5" stroke="#808080" stroke-width="1" stroke-dasharray="3 3"/>
<rect x="845" y="309" width="3" height="1" fill="#707070" />
<text x="842.00" y="314.00" font-family="'Liberation Sans', sans-serif" font-size="13" font-weight="normal" fill="#000" text-anchor="end" textLength="12.60" lengthAdjust="spacingAndGlyphs" >70</text>
<line x1="855" y1="288.5" x2="1875" y2="288.5" stroke="#808080" stroke-width="1" stroke-dasharray="3 3"/>
<rect x="845" y="288" width="3" height="1" fill="#707070" />
<text x="842.00" y="293.00" font-family="'Liberation Sans', sans-serif" font-size="13" font-weight="normal" fill="#000" text-anchor="end" textLength="12.60" lengthAdjust="spacingAndGlyphs" >75</text>
<line x1="855" y1="267.5" x2="1875" y2="267.5" stroke="#808080" stroke-width="1" stroke-dasharray="3 3"/>
<rect x="845" y="267" width="3" height="1" fill="#707070" />
<text x="842.00" y="272.00" font-family="'Liberation Sans', sans-serif" font-size="13" font-weight="normal" fill="#000" text-anchor="end" textLength="12.60" lengthAdjust="spacingAndGlyphs" >80</text>
<line x1="855" y1="245.5" x2="1875" y2="245.5" stroke="#808080" stroke-width="1" stroke-dasharray="3 3"/>
<rect x="845" y="245" width="3" height="1" fill="#707070" />
<text x="842.00" y="250.00" font-family="'Liberation Sans', sans-serif" font-size="13" font-weight="normal" fill="#000" text-anchor="end" textLength="12.60" lengthAdjust="spacingAndGlyphs" >85</text>
<line x1="855" y1="224.5" x2="1875" y2="224.5" stroke="#808080" stroke-width="1" stroke-dasharray="3 3"/>
<rect x="845" y="224" width="3" height="1" fill="#707070" />
<text x="842.00" y="229.00" font-family="'Liberation Sans', sans-serif" font-size="13" font-weight="normal" fill="#000" text-anchor="end" textLength="12.60" lengthAdjust="spacingAndGlyphs" >90</text>
<line x1="855" y1="202.5" x2="1875" y2="202.5" stroke="#808080" stroke-width="1" stroke-dasharray="3 3"/>
<rect x="845" y="202" width="3" height="1" fill="#707070" />
<text x="842.00" y="207.00" font-family="'Liberation Sans', sans-serif" font-size="13" font-weight="normal" fill="#000" text-anchor="end" textLength="12.60" lengthAdjust="spacingAndGlyphs" >95</text>
<line x1="855" y1="181.5" x2="1875" y2="181.5" stroke="#808080" stroke-width="1" stroke-dasharray="3 3"/>
<rect x="845" y="181" width="3" height="1" fill="#707070" />
<text x="842.00" y="186.00" font-family="'Liberation Sans', sans-serif" font-size="13" font-weight="normal" fill="#000" text-anchor="end" textLength="19.00" lengthAdjust="spacingAndGlyphs" >100</text>
<text x="842.00" y="614.00" font-family="'Liberation Sans', sans-serif" font-size="13" font-weight="normal" fill="#000" text-anchor="end" textLength="6.30" lengthAdjust="spacingAndGlyphs" >0</text>
<rect x="845" y="608" width="3" height="1" fill="#707070" />
<rect x="846" y="593" width="2" height="1" fill="#909090" />
<rect x="846" y="599" width="2" height="1" fill="#909090" />
<rect x="846" y="604" width="2" height="1" fill="#909090" />
<rect x="846" y="571" width="2" height="1" fill="#909090" />
<rect x="846" y="577" width="2" height="1" fill="#909090" />
<rect x="846" y="582" width="2" height="1" fill="#909090" />
<rect x="846" y="550" width="2" height="1" fill="#909090" />
<rect x="846" y="556" width="2" height="1" fill="#909090" />
<rect x="846" y="561" width="2" height="1" fill="#909090" />
<rect x="846" y="528" width="2" height="1" fill="#909090" />
<rect x="846" y="534" width="2" height="1" fill="#909090" />
<rect x="846" y="539" width="2" height="1" fill="#909090" />
<rect x="846" y="507" width="2" height="1" fill="#909090" />
<rect x="846" y="513" width="2" height="1" fill="#909090" />
<rect x="846" y="518" width="2" height="1" fill="#909090" />
<rect x="846" y="486" width="2" height="1" fill="#909090" />
<rect x="846" y="492" width="2" height="1" fill="#909090" />
<rect x="846" y="497" width="2" height="1" fill="#909090" />
<rect x="846" y="464" width="2" height="1" fill="#909090" />
<rect x="846" y="470" width="2" height="1" fill="#909090" />
<rect x="846" y="475" width="2" height="1" fill="#909090" />
<rect x="846" y="443" width="2" height="1" fill="#909090" />
<rect x="846" y="449" width="2" height="1" fill="#909090" />
<rect x="846" y="454" width="2" height="1" fill="#909090" />
<rect x="846" y="421" width="2" height="1" fill="#909090" />
<rect x="846" y="427" width="2" height="1" fill="#909090" />
<rect x="846" y="432" width="2" height="1" fill="#909090" />
<rect x="846" y="400" width="2" height="1" fill="#909090" />
<rect x="846" y="406" width="2" height="1" fill="#909090" />
<rect x="846" y="411" width="2" height="1" fill="#909090" />
<rect x="846" y="379" width="2" height="1" fill="#909090" />
<rect x="846" y="385" width="2" height="1" fill="#909090" />
<rect x="846" y="390" width="2" height="1" fill="#909090" />
<rect x="846" y="357" width="2" height="1" fill="#909090" />
<rect x="846" y="363" width="2" height="1" fill="#909090" />
<rect x="846" y="368" width="2" height="1" fill="#909090" />
<rect x="846" y="336" width="2" height="1" fill="#909090" />
<rect x="846" y="342" width="2" height="1" fill="#909090" />
<rect x="846" y="347" width="2" height="1" fill="#909090" />
<rect x="846" y="314" width="2" height="1" fill="#909090" />
<rect x="846" y="320" width="2" height="1" fill="#909090" />
<rect x="846" y="325" width="2" height="1" fill="#909090" />
<rect x="846" y="293" width="2" height="1" fill="#909090" />
<rect x="846" y="299" width="2" height="1" fill="#909090" />
<rect x="846" y="304" width="2" height="1" fill="#909090" />
<rect x="846" y="272" width="2" height="1" fill="#909090" />
<rect x="846" y="278" width="2" height="1" fill="#909090" />
<rect x="846" y="283" width="2" height="1" fill="#909090" />
<rect x="846" y="250" width="2" height="1" fill="#909090" />
<rect x="846" y="256" width="2" height="1" fill="#909090" />
<rect x="846" y="261" width="2" height="1" fill="#909090" />
<rect x="846" y="229" width="2" height="1" fill="#909090" />
<rect x="846" y="235" width="2" height="1" fill="#909090" />
<rect x="846" y="240" width="2" height="1" fill="#909090" />
<rect x="846" y="207" width="2" height="1" fill="#909090" />
<rect x="846" y="213" width="2" height="1" fill="#909090" />
<rect x="846" y="218" width="2" height="1" fill="#909090" />
<rect x="846" y="186" width="2" height="1" fill="#909090" />
<rect x="846" y="192" width="2" height="1" fill="#909090" />
<rect x="846" y="197" width="2" height="1" fill="#909090" />
<rect x="846" y="165" width="2" height="1" fill="#909090" />
<rect x="846" y="171" width="2" height="1" fill="#909090" />
<rect x="846" y="176" width="2" height="1" fill="#909090" />
</g>
<g shape-rendering="crispEdges">
<rect x="897.5" y="354.5" width="95" height="255" fill="#00ffff" stroke="#000" stroke-width="1"/>
<rect x="1036.5" y="395.5" width="95" height="214" fill="#00ffff" stroke="#000" stroke-width="1"/>
<rect x="1175.5" y="426.5" width="95" height="183" fill="#00ffff" stroke="#000" stroke-width="1"/>
<rect x="1315.5" y="446.5" width="95" height="163" fill="#00ffff" stroke="#000" stroke-width="1"/>
<rect x="1454.5" y="403.5" width="95" height="206" fill="#00ffff" stroke="#000" stroke-width="1"/>
<rect x="1593.5" y="354.5" width="95" height="255" fill="#00ffff" stroke="#000" stroke-width="1"/>
<rect x="1732.5" y="491.5" width="95" height="118" fill="#000080" stroke="#000" stroke-width="1"/>
</g>
<g shape-rendering="crispEdges">
<rect x="848" y="160" width="1029" height="1" fill="#000" />
<rect x="1876" y="160" width="1" height="450" fill="#000" />
<rect x="848" y="160" width="2" height="450" fill="#000" />
<rect x="848" y="608" width="1029" height="1" fill="#000" />
<rect x="848" y="609" width="1029" height="1" fill="#909090" />
<line x1="848" y1="609.5" x2="1877" y2="609.5" stroke="#000" stroke-width="1" stroke-dasharray="3 3"/>
<rect x="876" y="610" width="1" height="2" fill="#505050" />
<rect x="910" y="610" width="1" height="2" fill="#505050" />
<rect x="945" y="610" width="1" height="4" fill="#505050" />
<rect x="980" y="610" width="1" height="2" fill="#505050" />
<rect x="1015" y="610" width="1" height="2" fill="#505050" />
<rect x="1050" y="610" width="1" height="2" fill="#505050" />
<rect x="1084" y="610" width="1" height="4" fill="#505050" />
<rect x="1119" y="610" width="1" height="2" fill="#505050" />
<rect x="1154" y="610" width="1" height="2" fill="#505050" />
<rect x="1189" y="610" width="1" height="2" fill="#505050" />
<rect x="1224" y="610" width="1" height="4" fill="#505050" />
<rect x="1258" y="610" width="1" height="2" fill="#505050" />
<rect x="1293" y="610" width="1" height="2" fill="#505050" />
<rect x="1328" y="610" width="1" height="2" fill="#505050" />
<rect x="1363" y="610" width="1" height="4" fill="#505050" />
<rect x="1398" y="610" width="1" height="2" fill="#505050" />
<rect x="1432" y="610" width="1" height="2" fill="#505050" />
<rect x="1467" y="610" width="1" height="2" fill="#505050" />
<rect x="1502" y="610" width="1" height="4" fill="#505050" />
<rect x="1537" y="610" width="1" height="2" fill="#505050" />
<rect x="1572" y="610" width="1" height="2" fill="#505050" />
<rect x="1606" y="610" width="1" height="2" fill="#505050" />
<rect x="1641" y="610" width="1" height="4" fill="#505050" />
<rect x="1676" y="610" width="1" height="2" fill="#505050" />
<rect x="1711" y="610" width="1" height="2" fill="#505050" />
<rect x="1746" y="610" width="1" height="2" fill="#505050" />
<rect x="1780" y="610" width="1" height="4" fill="#505050" />
<rect x="1815" y="610" width="1" height="2" fill="#505050" />
<rect x="1850" y="610" width="1" height="2" fill="#505050" />
</g>
<rect x="928.5" y="328.5" width="33" height="16" fill="#fafa8c" stroke="#000" stroke-width="1" shape-rendering="crispEdges"/>
<rect x="945" y="344" width="1" height="10" fill="#000" shape-rendering="crispEdges"/>
<text x="945.00" y="341.00" font-family="'Liberation Serif', serif" font-size="13" font-weight="bold" fill="#000" text-anchor="middle" textLength="20.00" lengthAdjust="spacingAndGlyphs" >59.5</text>
<text x="945.50" y="626.00" font-family="'Liberation Serif', serif" font-size="12" font-weight="normal" fill="#000" text-anchor="middle" textLength="13.30" lengthAdjust="spacingAndGlyphs" >Ак</text>
<text x="945.50" y="640.00" font-family="'Liberation Serif', serif" font-size="12" font-weight="normal" fill="#000" text-anchor="middle" textLength="11.00" lengthAdjust="spacingAndGlyphs" >25</text>
<rect x="1072.5" y="369.5" width="23" height="16" fill="#fafa8c" stroke="#000" stroke-width="1" shape-rendering="crispEdges"/>
<rect x="1084" y="385" width="1" height="10" fill="#000" shape-rendering="crispEdges"/>
<text x="1084.00" y="382.00" font-family="'Liberation Serif', serif" font-size="13" font-weight="bold" fill="#000" text-anchor="middle" textLength="13.00" lengthAdjust="spacingAndGlyphs" >50</text>
<text x="1084.50" y="626.00" font-family="'Liberation Serif', serif" font-size="12" font-weight="normal" fill="#000" text-anchor="middle" textLength="13.30" lengthAdjust="spacingAndGlyphs" >Рб</text>
<text x="1084.50" y="640.00" font-family="'Liberation Serif', serif" font-size="12" font-weight="normal" fill="#000" text-anchor="middle" textLength="11.00" lengthAdjust="spacingAndGlyphs" >21</text>
<rect x="1206.5" y="400.5" width="33" height="16" fill="#fafa8c" stroke="#000" stroke-width="1" shape-rendering="crispEdges"/>
<rect x="1223" y="416" width="1" height="10" fill="#000" shape-rendering="crispEdges"/>
<text x="1223.00" y="413.00" font-family="'Liberation Serif', serif" font-size="13" font-weight="bold" fill="#000" text-anchor="middle" textLength="20.00" lengthAdjust="spacingAndGlyphs" >42.9</text>
<text x="1223.50" y="626.00" font-family="'Liberation Serif', serif" font-size="12" font-weight="normal" fill="#000" text-anchor="middle" textLength="13.30" lengthAdjust="spacingAndGlyphs" >Сп</text>
<text x="1223.50" y="640.00" font-family="'Liberation Serif', serif" font-size="12" font-weight="normal" fill="#000" text-anchor="middle" textLength="11.00" lengthAdjust="spacingAndGlyphs" >18</text>
<rect x="1346.5" y="420.5" width="33" height="16" fill="#fafa8c" stroke="#000" stroke-width="1" shape-rendering="crispEdges"/>
<rect x="1363" y="436" width="1" height="10" fill="#000" shape-rendering="crispEdges"/>
<text x="1363.00" y="433.00" font-family="'Liberation Serif', serif" font-size="13" font-weight="bold" fill="#000" text-anchor="middle" textLength="20.00" lengthAdjust="spacingAndGlyphs" >38.1</text>
<text x="1363.50" y="626.00" font-family="'Liberation Serif', serif" font-size="12" font-weight="normal" fill="#000" text-anchor="middle" textLength="13.30" lengthAdjust="spacingAndGlyphs" >ЭУ</text>
<text x="1363.50" y="640.00" font-family="'Liberation Serif', serif" font-size="12" font-weight="normal" fill="#000" text-anchor="middle" textLength="11.00" lengthAdjust="spacingAndGlyphs" >16</text>
<rect x="1485.5" y="377.5" width="33" height="16" fill="#fafa8c" stroke="#000" stroke-width="1" shape-rendering="crispEdges"/>
<rect x="1502" y="393" width="1" height="10" fill="#000" shape-rendering="crispEdges"/>
<text x="1502.00" y="390.00" font-family="'Liberation Serif', serif" font-size="13" font-weight="bold" fill="#000" text-anchor="middle" textLength="20.00" lengthAdjust="spacingAndGlyphs" >48.1</text>
<text x="1502.50" y="626.00" font-family="'Liberation Serif', serif" font-size="12" font-weight="normal" fill="#000" text-anchor="middle" textLength="13.30" lengthAdjust="spacingAndGlyphs" >УЖ</text>
<text x="1502.50" y="640.00" font-family="'Liberation Serif', serif" font-size="12" font-weight="normal" fill="#000" text-anchor="middle" textLength="11.00" lengthAdjust="spacingAndGlyphs" >26</text>
<rect x="1624.5" y="328.5" width="33" height="16" fill="#fafa8c" stroke="#000" stroke-width="1" shape-rendering="crispEdges"/>
<rect x="1641" y="344" width="1" height="10" fill="#000" shape-rendering="crispEdges"/>
<text x="1641.00" y="341.00" font-family="'Liberation Serif', serif" font-size="13" font-weight="bold" fill="#000" text-anchor="middle" textLength="20.00" lengthAdjust="spacingAndGlyphs" >59.5</text>
<text x="1641.50" y="626.00" font-family="'Liberation Serif', serif" font-size="12" font-weight="normal" fill="#000" text-anchor="middle" textLength="13.30" lengthAdjust="spacingAndGlyphs" >СЖ</text>
<text x="1641.50" y="640.00" font-family="'Liberation Serif', serif" font-size="12" font-weight="normal" fill="#000" text-anchor="middle" textLength="11.00" lengthAdjust="spacingAndGlyphs" >25</text>
<rect x="1763.5" y="465.5" width="33" height="16" fill="#fafa8c" stroke="#000" stroke-width="1" shape-rendering="crispEdges"/>
<rect x="1780" y="481" width="1" height="10" fill="#000" shape-rendering="crispEdges"/>
<text x="1780.00" y="478.00" font-family="'Liberation Serif', serif" font-size="13" font-weight="bold" fill="#000" text-anchor="middle" textLength="20.00" lengthAdjust="spacingAndGlyphs" >27.6</text>
<text x="1780.50" y="626.00" font-family="'Liberation Serif', serif" font-size="12" font-weight="normal" fill="#000" text-anchor="middle" textLength="13.30" lengthAdjust="spacingAndGlyphs" >АТ</text>
<text x="1780.50" y="640.00" font-family="'Liberation Serif', serif" font-size="12" font-weight="normal" fill="#000" text-anchor="middle" textLength="5.50" lengthAdjust="spacingAndGlyphs" >8</text>
<polyline points="895.3,277 990.5,277 1036,248 1130,248 1173.6,268 1413.2,268 1457.7,257 1550.5,257 1593.5,267.5 1690.3,267.5 1736.2,572 1830.6,572" fill="none" stroke="#5a0808" stroke-width="2" stroke-linejoin="miter"/>
<polyline points="895.3,410 990.5,410 1036,369.5 1130,369.5 1173.6,400 1413.5,400 1457.3,383 1550.5,383 1595.3,460.5 1690.3,460.5 1734.5,608.5 1830.6,608.5" fill="none" stroke="#5a0808" stroke-width="2" stroke-linejoin="miter"/>
<line x1="1736.5" y1="572" x2="1827" y2="572" stroke="#4e104e" stroke-width="2"/>
<text x="0.00" y="0.00" font-family="'Liberation Sans', sans-serif" font-size="13" font-weight="normal" fill="#000" text-anchor="start" textLength="64.40" lengthAdjust="spacingAndGlyphs" transform="translate(806 416) rotate(-90)">Уровень %</text>
<g shape-rendering="crispEdges">
<line x1="341" y1="732.5" x2="1711" y2="732.5" stroke="#808080" stroke-width="1" stroke-dasharray="3 3"/>
<line x1="341" y1="748.5" x2="1711" y2="748.5" stroke="#808080" stroke-width="1" stroke-dasharray="3 3"/>
<line x1="341" y1="764.5" x2="1711" y2="764.5" stroke="#808080" stroke-width="1" stroke-dasharray="3 3"/>
<line x1="341" y1="780.5" x2="1711" y2="780.5" stroke="#808080" stroke-width="1" stroke-dasharray="3 3"/>
<line x1="341" y1="796.5" x2="1711" y2="796.5" stroke="#808080" stroke-width="1" stroke-dasharray="3 3"/>
<line x1="341" y1="812.5" x2="1711" y2="812.5" stroke="#808080" stroke-width="1" stroke-dasharray="3 3"/>
<line x1="341" y1="828.5" x2="1711" y2="828.5" stroke="#808080" stroke-width="1" stroke-dasharray="3 3"/>
<line x1="343.5" y1="718" x2="343.5" y2="838" stroke="#606060" stroke-width="1" stroke-dasharray="3 3"/>
<text x="344.00" y="713.80" font-family="'Liberation Sans', sans-serif" font-size="12" font-weight="normal" fill="#000" text-anchor="middle" textLength="6.20" lengthAdjust="spacingAndGlyphs" >1</text>
<line x1="494.5" y1="718" x2="494.5" y2="838" stroke="#606060" stroke-width="1" stroke-dasharray="3 3"/>
<text x="495.00" y="713.80" font-family="'Liberation Sans', sans-serif" font-size="12" font-weight="normal" fill="#000" text-anchor="middle" textLength="6.20" lengthAdjust="spacingAndGlyphs" >2</text>
<line x1="645.5" y1="718" x2="645.5" y2="838" stroke="#606060" stroke-width="1" stroke-dasharray="3 3"/>
<text x="646.00" y="713.80" font-family="'Liberation Sans', sans-serif" font-size="12" font-weight="normal" fill="#000" text-anchor="middle" textLength="6.20" lengthAdjust="spacingAndGlyphs" >3</text>
<line x1="796.5" y1="718" x2="796.5" y2="838" stroke="#606060" stroke-width="1" stroke-dasharray="3 3"/>
<text x="797.00" y="713.80" font-family="'Liberation Sans', sans-serif" font-size="12" font-weight="normal" fill="#000" text-anchor="middle" textLength="6.20" lengthAdjust="spacingAndGlyphs" >4</text>
<line x1="947.5" y1="718" x2="947.5" y2="838" stroke="#606060" stroke-width="1" stroke-dasharray="3 3"/>
<text x="948.00" y="713.80" font-family="'Liberation Sans', sans-serif" font-size="12" font-weight="normal" fill="#000" text-anchor="middle" textLength="6.20" lengthAdjust="spacingAndGlyphs" >5</text>
<line x1="1099.5" y1="718" x2="1099.5" y2="838" stroke="#606060" stroke-width="1" stroke-dasharray="3 3"/>
<text x="1100.00" y="713.80" font-family="'Liberation Sans', sans-serif" font-size="12" font-weight="normal" fill="#000" text-anchor="middle" textLength="6.20" lengthAdjust="spacingAndGlyphs" >6</text>
<line x1="1250.5" y1="718" x2="1250.5" y2="838" stroke="#606060" stroke-width="1" stroke-dasharray="3 3"/>
<text x="1251.00" y="713.80" font-family="'Liberation Sans', sans-serif" font-size="12" font-weight="normal" fill="#000" text-anchor="middle" textLength="6.20" lengthAdjust="spacingAndGlyphs" >7</text>
<line x1="1401.5" y1="718" x2="1401.5" y2="838" stroke="#606060" stroke-width="1" stroke-dasharray="3 3"/>
<text x="1402.00" y="713.80" font-family="'Liberation Sans', sans-serif" font-size="12" font-weight="normal" fill="#000" text-anchor="middle" textLength="6.20" lengthAdjust="spacingAndGlyphs" >8</text>
<line x1="1552.5" y1="718" x2="1552.5" y2="838" stroke="#606060" stroke-width="1" stroke-dasharray="3 3"/>
<text x="1553.00" y="713.80" font-family="'Liberation Sans', sans-serif" font-size="12" font-weight="normal" fill="#000" text-anchor="middle" textLength="6.20" lengthAdjust="spacingAndGlyphs" >9</text>
<line x1="1703.5" y1="718" x2="1703.5" y2="838" stroke="#606060" stroke-width="1" stroke-dasharray="3 3"/>
<text x="1704.00" y="713.80" font-family="'Liberation Sans', sans-serif" font-size="12" font-weight="normal" fill="#000" text-anchor="middle" textLength="12.50" lengthAdjust="spacingAndGlyphs" >10</text>
<rect x="381" y="720" width="1" height="2" fill="#606060" />
<rect x="419" y="720" width="1" height="2" fill="#606060" />
<rect x="456" y="720" width="1" height="2" fill="#606060" />
<rect x="532" y="720" width="1" height="2" fill="#606060" />
<rect x="570" y="720" width="1" height="2" fill="#606060" />
<rect x="607" y="720" width="1" height="2" fill="#606060" />
<rect x="683" y="720" width="1" height="2" fill="#606060" />
<rect x="721" y="720" width="1" height="2" fill="#606060" />
<rect x="759" y="720" width="1" height="2" fill="#606060" />
<rect x="834" y="720" width="1" height="2" fill="#606060" />
<rect x="872" y="720" width="1" height="2" fill="#606060" />
<rect x="910" y="720" width="1" height="2" fill="#606060" />
<rect x="985" y="720" width="1" height="2" fill="#606060" />
<rect x="1023" y="720" width="1" height="2" fill="#606060" />
<rect x="1061" y="720" width="1" height="2" fill="#606060" />
<rect x="1136" y="720" width="1" height="2" fill="#606060" />
<rect x="1174" y="720" width="1" height="2" fill="#606060" />
<rect x="1212" y="720" width="1" height="2" fill="#606060" />
<rect x="1287" y="720" width="1" height="2" fill="#606060" />
<rect x="1325" y="720" width="1" height="2" fill="#606060" />
<rect x="1363" y="720" width="1" height="2" fill="#606060" />
<rect x="1438" y="720" width="1" height="2" fill="#606060" />
<rect x="1476" y="720" width="1" height="2" fill="#606060" />
<rect x="1514" y="720" width="1" height="2" fill="#606060" />
<rect x="1590" y="720" width="1" height="2" fill="#606060" />
<rect x="1627" y="720" width="1" height="2" fill="#606060" />
<rect x="1665" y="720" width="1" height="2" fill="#606060" />
<rect x="333" y="724" width="2" height="1" fill="#606060" />
<rect x="1712" y="724" width="2" height="1" fill="#606060" />
<rect x="333" y="728" width="2" height="1" fill="#606060" />
<rect x="1712" y="728" width="2" height="1" fill="#606060" />
<rect x="333" y="732" width="2" height="1" fill="#606060" />
<rect x="1712" y="732" width="2" height="1" fill="#606060" />
<rect x="333" y="736" width="2" height="1" fill="#606060" />
<rect x="1712" y="736" width="2" height="1" fill="#606060" />
<rect x="333" y="740" width="2" height="1" fill="#606060" />
<rect x="1712" y="740" width="2" height="1" fill="#606060" />
<rect x="333" y="744" width="2" height="1" fill="#606060" />
<rect x="1712" y="744" width="2" height="1" fill="#606060" />
<rect x="333" y="748" width="2" height="1" fill="#606060" />
<rect x="1712" y="748" width="2" height="1" fill="#606060" />
<rect x="333" y="752" width="2" height="1" fill="#606060" />
<rect x="1712" y="752" width="2" height="1" fill="#606060" />
<rect x="333" y="756" width="2" height="1" fill="#606060" />
<rect x="1712" y="756" width="2" height="1" fill="#606060" />
<rect x="333" y="760" width="2" height="1" fill="#606060" />
<rect x="1712" y="760" width="2" height="1" fill="#606060" />
<rect x="333" y="764" width="2" height="1" fill="#606060" />
<rect x="1712" y="764" width="2" height="1" fill="#606060" />
<rect x="333" y="768" width="2" height="1" fill="#606060" />
<rect x="1712" y="768" width="2" height="1" fill="#606060" />
<rect x="333" y="772" width="2" height="1" fill="#606060" />
<rect x="1712" y="772" width="2" height="1" fill="#606060" />
<rect x="333" y="776" width="2" height="1" fill="#606060" />
<rect x="1712" y="776" width="2" height="1" fill="#606060" />
<rect x="333" y="780" width="2" height="1" fill="#606060" />
<rect x="1712" y="780" width="2" height="1" fill="#606060" />
<rect x="333" y="784" width="2" height="1" fill="#606060" />
<rect x="1712" y="784" width="2" height="1" fill="#606060" />
<rect x="333" y="788" width="2" height="1" fill="#606060" />
<rect x="1712" y="788" width="2" height="1" fill="#606060" />
<rect x="333" y="792" width="2" height="1" fill="#606060" />
<rect x="1712" y="792" width="2" height="1" fill="#606060" />
<rect x="333" y="796" width="2" height="1" fill="#606060" />
<rect x="1712" y="796" width="2" height="1" fill="#606060" />
<rect x="333" y="800" width="2" height="1" fill="#606060" />
<rect x="1712" y="800" width="2" height="1" fill="#606060" />
<rect x="333" y="804" width="2" height="1" fill="#606060" />
<rect x="1712" y="804" width="2" height="1" fill="#606060" />
<rect x="333" y="808" width="2" height="1" fill="#606060" />
<rect x="1712" y="808" width="2" height="1" fill="#606060" />
<rect x="333" y="812" width="2" height="1" fill="#606060" />
<rect x="1712" y="812" width="2" height="1" fill="#606060" />
<rect x="333" y="816" width="2" height="1" fill="#606060" />
<rect x="1712" y="816" width="2" height="1" fill="#606060" />
<rect x="333" y="820" width="2" height="1" fill="#606060" />
<rect x="1712" y="820" width="2" height="1" fill="#606060" />
<rect x="333" y="824" width="2" height="1" fill="#606060" />
<rect x="1712" y="824" width="2" height="1" fill="#606060" />
<rect x="333" y="828" width="2" height="1" fill="#606060" />
<rect x="1712" y="828" width="2" height="1" fill="#606060" />
<rect x="333" y="832" width="2" height="1" fill="#606060" />
<rect x="1712" y="832" width="2" height="1" fill="#606060" />
<rect x="333" y="836" width="2" height="1" fill="#606060" />
<rect x="1712" y="836" width="2" height="1" fill="#606060" />
<rect x="331" y="732" width="4" height="1" fill="#606060" />
<rect x="1712" y="732" width="4" height="1" fill="#606060" />
<rect x="331" y="748" width="4" height="1" fill="#606060" />
<rect x="1712" y="748" width="4" height="1" fill="#606060" />
<rect x="331" y="764" width="4" height="1" fill="#606060" />
<rect x="1712" y="764" width="4" height="1" fill="#606060" />
<rect x="331" y="780" width="4" height="1" fill="#606060" />
<rect x="1712" y="780" width="4" height="1" fill="#606060" />
<rect x="331" y="796" width="4" height="1" fill="#606060" />
<rect x="1712" y="796" width="4" height="1" fill="#606060" />
<rect x="331" y="812" width="4" height="1" fill="#606060" />
<rect x="1712" y="812" width="4" height="1" fill="#606060" />
<rect x="331" y="828" width="4" height="1" fill="#606060" />
<rect x="1712" y="828" width="4" height="1" fill="#606060" />
<rect x="947.5" y="727.5" width="76" height="9" fill="#e6d64e" stroke="#000" stroke-width="1"/>
<rect x="645.5" y="743.5" width="378" height="9" fill="#ef8b64" stroke="#000" stroke-width="1"/>
<rect x="645.5" y="759.5" width="378" height="9" fill="#ef8b64" stroke="#000" stroke-width="1"/>
<rect x="494.5" y="775.5" width="529" height="9" fill="#ef8b64" stroke="#000" stroke-width="1"/>
<rect x="645.5" y="791.5" width="378" height="9" fill="#ef8b64" stroke="#000" stroke-width="1"/>
<rect x="1023.5" y="807.5" width="76" height="9" fill="#46c15a" stroke="#000" stroke-width="1"/>
<rect x="1023.5" y="823.5" width="680" height="9" fill="#ef8b64" stroke="#000" stroke-width="1"/>
<rect x="1022" y="722" width="1" height="117" fill="#b01818" />
<rect x="335" y="722" width="1377" height="1" fill="#000" />
<rect x="335" y="838" width="1377" height="1" fill="#000" />
<rect x="335" y="722" width="1" height="117" fill="#000" />
<rect x="1711" y="722" width="1" height="117" fill="#000" />
</g>
<text x="197.00" y="717.00" font-family="'Liberation Sans', sans-serif" font-size="13" font-weight="bold" fill="#000" text-anchor="start" textLength="76.70" lengthAdjust="spacingAndGlyphs" >Показатели</text>
<text x="1783.00" y="716.70" font-family="'Liberation Sans', sans-serif" font-size="13" font-weight="bold" fill="#000" text-anchor="start" textLength="55.30" lengthAdjust="spacingAndGlyphs" >Уровень</text>
<text x="329.00" y="735.90" font-family="'Liberation Sans', sans-serif" font-size="11" font-weight="normal" fill="#000" text-anchor="end" textLength="84.80" lengthAdjust="spacingAndGlyphs" >Активность (Ак)</text>
<text x="1716.70" y="735.90" font-family="'Liberation Sans', sans-serif" font-size="11" font-weight="normal" fill="#000" text-anchor="start" textLength="40.80" lengthAdjust="spacingAndGlyphs" >средний</text>
<text x="329.00" y="751.90" font-family="'Liberation Sans', sans-serif" font-size="11" font-weight="normal" fill="#000" text-anchor="end" textLength="123.60" lengthAdjust="spacingAndGlyphs" >Работоспособность (Рб)</text>
<text x="1716.70" y="751.90" font-family="'Liberation Sans', sans-serif" font-size="11" font-weight="normal" fill="#000" text-anchor="start" textLength="33.00" lengthAdjust="spacingAndGlyphs" >низкий</text>
<text x="329.00" y="767.90" font-family="'Liberation Sans', sans-serif" font-size="11" font-weight="normal" fill="#000" text-anchor="end" textLength="89.60" lengthAdjust="spacingAndGlyphs" >Спокойствие (Сп)</text>
<text x="1716.70" y="767.90" font-family="'Liberation Sans', sans-serif" font-size="11" font-weight="normal" fill="#000" text-anchor="start" textLength="33.00" lengthAdjust="spacingAndGlyphs" >низкий</text>
<text x="329.00" y="783.90" font-family="'Liberation Sans', sans-serif" font-size="11" font-weight="normal" fill="#000" text-anchor="end" textLength="132.00" lengthAdjust="spacingAndGlyphs" >Эмоц. устойчивость (ЭУ)</text>
<text x="1716.70" y="783.90" font-family="'Liberation Sans', sans-serif" font-size="11" font-weight="normal" fill="#000" text-anchor="start" textLength="33.00" lengthAdjust="spacingAndGlyphs" >низкий</text>
<text x="329.00" y="799.90" font-family="'Liberation Sans', sans-serif" font-size="11" font-weight="normal" fill="#000" text-anchor="end" textLength="175.70" lengthAdjust="spacingAndGlyphs" >Удовлетворенность жизнью (УЖ)</text>
<text x="1716.70" y="799.90" font-family="'Liberation Sans', sans-serif" font-size="11" font-weight="normal" fill="#000" text-anchor="start" textLength="33.00" lengthAdjust="spacingAndGlyphs" >низкий</text>
<text x="329.00" y="815.90" font-family="'Liberation Sans', sans-serif" font-size="11" font-weight="normal" fill="#000" text-anchor="end" textLength="133.40" lengthAdjust="spacingAndGlyphs" >Соц. желательность (СЖ)</text>
<text x="1716.70" y="815.90" font-family="'Liberation Sans', sans-serif" font-size="11" font-weight="normal" fill="#000" text-anchor="start" textLength="40.80" lengthAdjust="spacingAndGlyphs" >средний</text>
<text x="329.00" y="831.90" font-family="'Liberation Sans', sans-serif" font-size="11" font-weight="normal" fill="#000" text-anchor="end" textLength="138.60" lengthAdjust="spacingAndGlyphs" >Атипичность ответов (АТ)</text>
<text x="1716.70" y="831.90" font-family="'Liberation Sans', sans-serif" font-size="11" font-weight="normal" fill="#000" text-anchor="start" textLength="43.00" lengthAdjust="spacingAndGlyphs" >высокий</text>
<text x="153.75" y="896.00" font-family="'Liberation Sans', sans-serif" font-size="11" font-weight="normal" fill="#000" text-anchor="start" textLength="248.35" lengthAdjust="spacingAndGlyphs" xml:space="preserve">[AT++]  Достверность результатов сомнительна.</text>
<text x="153.75" y="909.00" font-family="'Liberation Sans', sans-serif" font-size="11" font-weight="normal" fill="#000" text-anchor="start" textLength="828.35" lengthAdjust="spacingAndGlyphs" xml:space="preserve">Подобный результат может быть следствием хаотического реагирования (заполнения бланка) из-за безразличного или негативного отношения к обследованию.</text>
<text x="153.75" y="922.00" font-family="'Liberation Sans', sans-serif" font-size="11" font-weight="normal" fill="#000" text-anchor="start" textLength="668.45" lengthAdjust="spacingAndGlyphs" xml:space="preserve">[Ак=]  Умеренно выраженная готовность действовать при наличии благоприятных условий для этого. Умеренная инициативность.</text>
<text x="153.75" y="935.00" font-family="'Liberation Sans', sans-serif" font-size="11" font-weight="normal" fill="#000" text-anchor="start" textLength="1416.25" lengthAdjust="spacingAndGlyphs" xml:space="preserve">[Рб--]  Характерна усталость, несобранность, вялость, инертность, низкая работоспособность. Неготовность проявлять активность, расходовать энергию. Снижен ресурс сил, повышена утомляемость. Склонность проявлять астенические реакции на возникающие трудности.</text>
<text x="153.75" y="948.00" font-family="'Liberation Sans', sans-serif" font-size="11" font-weight="normal" fill="#000" text-anchor="start" textLength="1689.35" lengthAdjust="spacingAndGlyphs" xml:space="preserve">[Сп--]  Повышена склонность испытывать беспокойство в широком спектре жизненных ситуаций, видеть угрозу престижу, благополучию, независимо от того, насколько реальны причины. Ожидание событий с неблагоприятным исходом, предчувствие будущей угрозы (наказания, потери уважения или самоуважения) без ясного</text>
<text x="138.85" y="961.00" font-family="'Liberation Sans', sans-serif" font-size="11" font-weight="normal" fill="#000" text-anchor="start" textLength="131.35" lengthAdjust="spacingAndGlyphs" xml:space="preserve">осознания ее источников.</text>
<text x="153.75" y="974.00" font-family="'Liberation Sans', sans-serif" font-size="11" font-weight="normal" fill="#000" text-anchor="start" textLength="1101.35" lengthAdjust="spacingAndGlyphs" xml:space="preserve">[ЭУ--]  Эмоциональная устойчивость снижена. Характерно легко возникающее эмоциональное возбуждение, изменчивое настроение, повышенная раздражительность, преобладает негативный эмоциональный тон.</text>
<rect x="1893" y="885" width="17" height="102" fill="#f0f0f0" />
<rect x="1892" y="885" width="1" height="102" fill="#e6e6e6" />
<path d="M1897.5,895.5 L1901.5,891.5 L1905.5,895.5 Z" fill="#404040"/>
<path d="M1897.5,978 L1901.5,982 L1905.5,978 Z" fill="#404040"/>
<rect x="1893.5" y="902.5" width="14" height="41" rx="2" fill="url(#thumb)" stroke="#9a9a9a" stroke-width="1"/>
<path d="M1898,919.5 H1904 M1898,921.5 H1904 M1898,923.5 H1904 M1898,925.5 H1904" stroke="#606060" stroke-width="1"/>
</svg>
</body></html>
